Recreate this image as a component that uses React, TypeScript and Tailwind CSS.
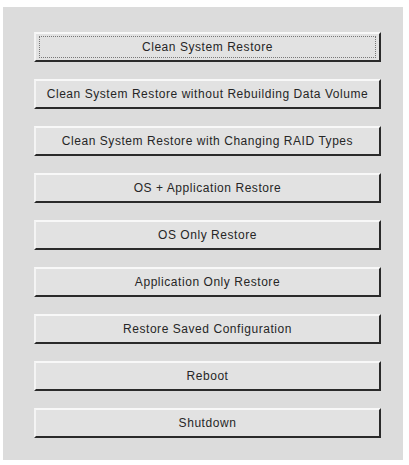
const ITEMS = [
  "Clean System Restore",
  "Clean System Restore without Rebuilding Data Volume",
  "Clean System Restore with Changing RAID Types",
  "OS + Application Restore",
  "OS Only Restore",
  "Application Only Restore",
  "Restore Saved Configuration",
  "Reboot",
  "Shutdown",
];

export default function App() {
  return (
    <div className="w-[409px] h-[465px] bg-white overflow-hidden">
      <div className="ml-[3px] mt-[7px] w-[400px] h-[453px] bg-[#dcdcdc] pt-[25px] pl-[31px]">
        <div className="flex flex-col gap-[17px] w-[347px]">
          {ITEMS.map((label, i) => (
            <button
              key={label}
              className="h-[30px] w-full bg-[#e2e2e2] border-2 border-t-[#f8f8f8] border-l-[#f4f4f4] border-b-[#2a2a2a] border-r-[#2a2a2a] flex items-center justify-center text-[12px] text-[#262626] font-['Liberation_Sans',sans-serif] tracking-[0.55px]"
            >
              <span
                className={
                  i === 0
                    ? "flex items-center justify-center w-[337px] h-[22px] border border-dotted border-[#777]"
                    : ""
                }
              >
                {label}
              </span>
            </button>
          ))}
        </div>
      </div>
    </div>
  );
}
